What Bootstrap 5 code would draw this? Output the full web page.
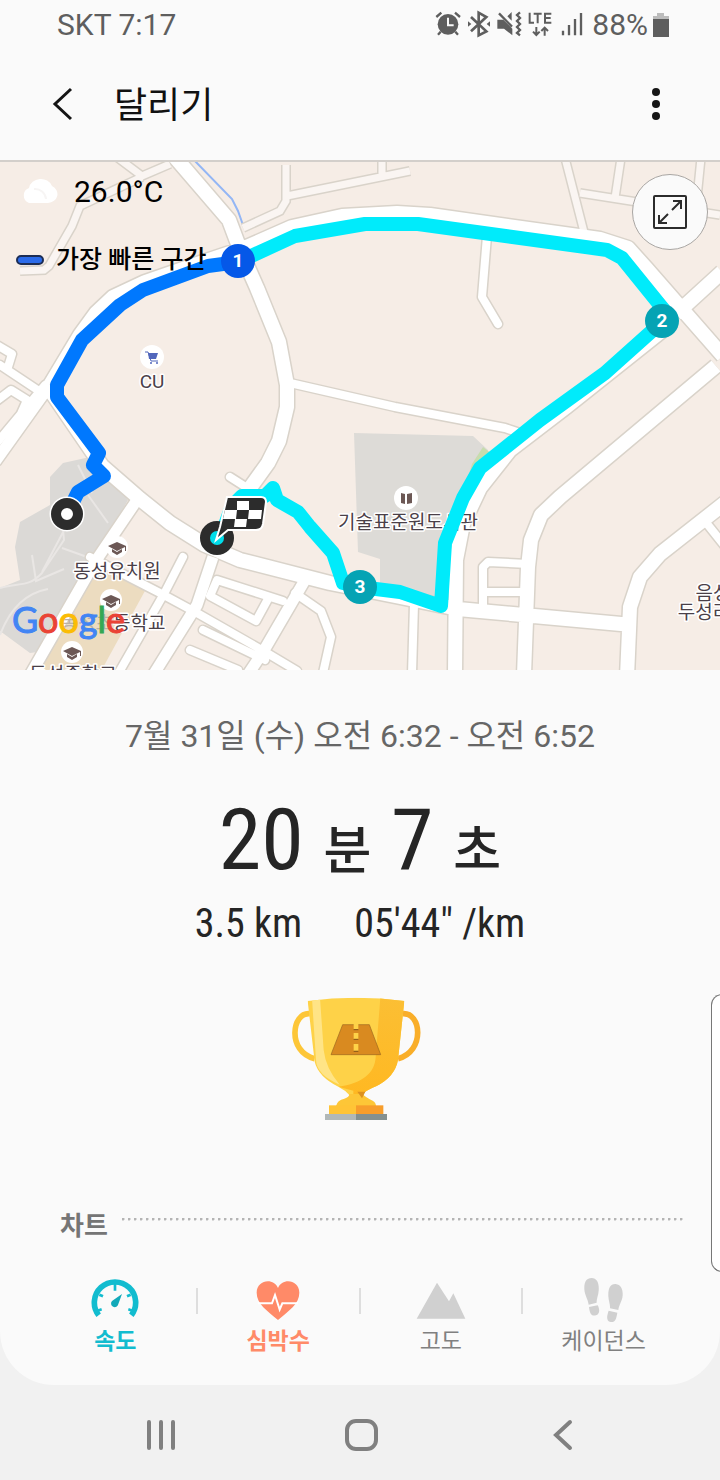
<!DOCTYPE html>
<html lang="ko">
<head>
<meta charset="utf-8">
<meta name="viewport" content="width=device-width, initial-scale=1">
<title>달리기</title>
<link href="https://cdn.jsdelivr.net/npm/bootstrap@5.3.0/dist/css/bootstrap.min.css" rel="stylesheet">
<style>
  body { background: #f1f1f1; color: #252525; font-family: Roboto, "Noto Sans CJK KR", sans-serif; }
  svg { display: block; }
  button { border: 0; background: none; padding: 0; color: inherit; }
  .screen { background: #fafafa; border-radius: 0 0 54px 54px; }
  .statusbar { height: 48px; padding: 2px 50px 0 57px; color: #5e5e5e; font-size: 30px; line-height: 46px; }
  .appbar { height: 112px; padding: 0 52px; }
  .appbar h1 { font-size: 36px; line-height: 48px; color: #111; font-weight: 400; margin: 4px 0 0 38px; }
  .map-area { border-top: 2px solid #d3cfcb; aspect-ratio: 720 / 510; }
  .map-info { top: 8px; left: 16px; color: #000; }
  .weather { font-size: 30px; line-height: 44px; }
  .legend { font-size: 25px; line-height: 36px; font-weight: 500; margin-top: 28px; }
  .legend-line { width: 28px; height: 10px; border: 2px solid #1c2d55; border-radius: 5px; background: #2b6bea; }
  .expand { top: 12px; right: 12px; width: 76px; height: 76px; border: 1px solid #a9a6a3; border-radius: 50%; background: #fafafa; }
  .when { font-size: 32px; line-height: 48px; color: #666; padding-top: 42px; }
  .duration, .pace { font-family: "Roboto Condensed", "Liberation Sans Narrow", Roboto, "Noto Sans CJK KR", sans-serif; }
  .duration { font-size: 86px; line-height: 96px; font-weight: 400; padding-top: 32px; color: #252525; }
  .duration .unit { font-size: 52px; font-weight: 500; }
  .pace { font-size: 40px; line-height: 48px; gap: 52px; }
  .trophy { width: 160px; padding-top: 32px; }
  .chart-head { padding: 78px 36px 0 60px; color: #757575; }
  .chart-head h2 { font-size: 26px; line-height: 36px; font-weight: 700; }
  .dots { height: 3px; margin: 0 0 14px 14px; background: radial-gradient(circle at 1px 1px, #b4b4b4 1px, transparent 2px) 0 0 / 6px 3px; }
  .chart-tabs { padding: 34px 36px 27px 35px; }
  .chart-tabs button { font-size: 23px; line-height: 32px; color: #808080; }
  .chart-tabs .speed { color: #12bccf; font-weight: 700; }
  .chart-tabs .heart { color: #ff8a68; font-weight: 700; }
  .split { width: 2px; height: 26px; margin-top: 10px; background: #dedede; }
  .edge-panel { right: -2px; top: 324px; width: 11px; height: 278px; border: 1px solid #777; border-radius: 14px 0 0 14px; background: #fff; }
  .navkeys { height: 96px; padding: 4px 59px 0 61px; }
  .lbl { font: 400 19px Roboto, "Noto Sans CJK KR", sans-serif; fill: #4a4048; stroke: #fff; stroke-width: 3px; paint-order: stroke; stroke-linejoin: round; text-anchor: middle; }
  .under-logo { fill: #b9b0a8; stroke: none; }
  .num { font: 700 19px Roboto, sans-serif; fill: #fff; text-anchor: middle; }
</style>
</head>
<body>
<div class="screen">
  <header>
    <div class="statusbar d-flex justify-content-between align-items-center">
      <span>SKT 7:17</span>
      <div class="d-flex align-items-center">
        <svg width="154" height="36" viewBox="100 20 462 108" fill="#5e5e5e" stroke="#5e5e5e" stroke-width="0">
          <circle cx="142" cy="72" r="31"/><path d="M107 50l15-13M163 37l15 13M120 94l-8 9M164 94l8 9" fill="none" stroke-width="7"/><path d="M142 52v23h17" fill="none" stroke="#fafafa" stroke-width="6"/>
          <path d="M211 50l46 43-23 12V37l23 13-46 43" fill="none" stroke-width="8"/><path d="M202 63l10 8-10 8zM268 63l-10 8 10 8z"/>
          <path d="M290 58h18l27 27v20l-25-20h-20zM333 35v26l-13-13z"/><path d="M295 39l39 40" stroke-width="7"/><path d="M358 36l-9 8 9 9-9 9 9 9-9 9 9 9-9 9 9 7" fill="none" stroke-width="7"/>
          <path d="M387 37v30h13M399 40h24M411 40v29M452 40h-19v27h19M433 53h17" fill="none" stroke-width="6"/>
          <path d="M407 80v23M397 94l10 10 10-10M432 106V83M422 92l10-10 10 10" fill="none" stroke-width="6"/>
          <path d="M487 91v14M505 74v31M523 56v49M541 38v67" fill="none" stroke-width="7"/>
        </svg>
        <span class="ps-1 pe-1">88%</span>
        <svg width="18" height="26" viewBox="0 0 18 26"><path d="M5 1h7v3h5v4H1V4h4z" fill="#bcbcbc"/><path d="M1 7h16v18H1z" fill="#5e5e5e"/></svg>
      </div>
    </div>
    <div class="appbar d-flex align-items-center">
      <button aria-label="뒤로"><svg width="24" height="34" viewBox="0 0 24 34"><path d="M19 2L3 17l16 15" fill="none" stroke="#151515" stroke-width="3"/></svg></button>
      <h1>달리기</h1>
      <button class="ms-auto" aria-label="더보기"><svg width="24" height="34" viewBox="0 0 24 34" fill="#151515"><circle cx="12" cy="5" r="4"/><circle cx="12" cy="17" r="4"/><circle cx="12" cy="29" r="4"/></svg></button>
    </div>
  </header>

  <section class="map-area position-relative overflow-hidden" aria-label="지도">
    <svg width="100%" height="100%" viewBox="0 162 720 508" preserveAspectRatio="xMidYMid slice">
      <defs>
        <g id="paths" fill="none">
          <path d="M118 158l24 18 28-12M142 177L80 206l-8 20-23 40-5 4-24 1M286 165v36l-6 10-37 17M287 196l123-25M382 158v18M565 158l20 78M580 193l140 22M621 158l-6 40M701 158l-4 40"/>
        </g>
        <g id="lanes" fill="none" stroke-linecap="round" stroke-linejoin="round">
          <path d="M487 236l-5 61 16 27M290 383l105 24 110 21 12 4M230 477l22 14M0 365l45 30M-5 344l17 10-4 13M-5 402l16-12 16 10-8 18M90 557l70 36 37 20 70 40 30 18M183 557l-18 35-47 82M283 601l-66-21-7 16 46 25 12-22M203 630l62 30M190 650l48 20-4 10M295 593l26 18 10 26-8 36M483 612v-45l5-5 40 2M484 592h42M414 604l-2 70M708 525l16 20M45 385l-50 60"/>
        </g>
        <g id="streets" fill="none" stroke-linejoin="round">
          <path d="M137 500l-42 62-66 115M213 557l-16 48-45 72M305 580l-42 72-16 24M-5 462l55-77"/>
        </g>
        <g id="avenues" fill="none" stroke-linejoin="round">
          <path d="M174 156l55 64 12 32 16 36 22 54 8 43v22l-8 34-11 22-18 25M50 385l30-50 16-22 17-16 32-15 55-19 42-14 50-22 50-11 55-3 33 2 170 24 28 9 18 20 77 88M676 314l46-42M716 366l-156 131-19 18-10 25-3 27-4 108M664 329l-98 78-56 43-30 38-17 36-7 36-1 115M50 390l52 76 38 33 30 24 35 22 35 15 90 23 70 14 58 12 174 16M726 502l-66 52-20 23-10 30-3 70"/>
        </g>
      </defs>
      <rect y="158" width="720" height="514" fill="#f6ede6"/>
      <path d="M50 477l13-14 27-6 38 43-38 67-45 84-15 2-30-22v-43l20-8-5-33 5-25 30-17z" fill="#dbd9d6"/>
      <path d="M0 588c20-6 28 0 42-15l22-33-4-42M42 572l38-72M32 555l4 26 28-12M78 465l14 28M0 635q15-40 48-46M88 495l20 28M62 548l28 10" fill="none" stroke="#e9e6e4" stroke-width="2"/>
      <path d="M88 568l24 4 34 17-46 84H36z" fill="#ecdcc0"/>
      <path d="M354 433l119 3 15 14-22 50-22 100-64-13v-28l-22-7z" fill="#dddbd7"/><path d="M483 447l9 7-24 24 4-14z" fill="#c7dcae"/>
      <path d="M192 158l40 41 6 12 5 14" fill="none" stroke="#93b6f5" stroke-width="2"/>
      <g stroke="#d9d3ca"><use href="#paths" stroke-width="10"/><use href="#lanes" stroke-width="11"/><use href="#streets" stroke-width="14"/><use href="#avenues" stroke-width="17"/></g>
      <use href="#paths" stroke="#faf5f2" stroke-width="7"/>
      <g stroke="#fff"><use href="#lanes" stroke-width="8"/><use href="#streets" stroke-width="11"/><use href="#avenues" stroke-width="14"/></g>

      <g fill="#fff"><circle cx="152" cy="357" r="12"/><circle cx="117" cy="547" r="11"/><circle cx="111" cy="600" r="11"/><circle cx="72" cy="652" r="11"/><circle cx="406" cy="498" r="12"/></g>
      <path d="M148 353h10l-2 6h-7z" fill="#5166bb"/><path d="M145 352h3l3 9h7" fill="none" stroke="#5166bb" stroke-width="1"/><circle cx="151" cy="363" r="1" fill="#5166bb"/><circle cx="157" cy="363" r="1" fill="#5166bb"/>
      <g fill="#6c5855"><path id="cap" d="M108 546l9-4 9 4v5h-1v-4l-8 4zM112 549l5 3 5-3v3l-5 3-5-3z"/><use href="#cap" x="-6" y="53"/><use href="#cap" x="-45" y="105"/><path d="M401 493l4 1v10l-4-1zM407 494l5-1v10l-5 1z"/></g>
      <text class="lbl" x="152" y="388">CU</text>
      <text class="lbl" x="117" y="578">동성유치원</text>
      <text class="lbl" x="113" y="630"><tspan class="under-logo">동성초</tspan>등학교</text>
      <text class="lbl" x="73" y="681">동성중학교</text>
      <text class="lbl" x="408" y="529">기술표준원도서관</text>
      <text class="lbl" x="713" y="600">음성</text>
      <text class="lbl" x="704" y="619">두성리</text>

      <g fill="none" stroke-width="14" stroke-linejoin="round">
        <path d="M238 262l57-26 70-12h53l189 26 15 8 42 52-2 12-57 51-65 47-60 48-17 30-18 45-4 63-41-14-40-5-17-4-10-30-23-26-12-15-21-12-4-12-8 8-23 0-10 10-14 38" stroke="#00ebfb"/>
        <path d="M238 262l-30 4-65 24-23 15-38 35-25 45v12l42 56-6 12 11 11-26 16-11 22" stroke="#0078fe"/>
      </g>
      <circle cx="67" cy="514" r="12" fill="#fff" stroke="#fff" stroke-width="11"/><circle cx="67" cy="514" r="11" fill="#fff" stroke="#2c2c2c" stroke-width="10"/>
      <circle cx="217" cy="538" r="12" fill="#2c2c2c" stroke="#2c2c2c" stroke-width="10"/><circle cx="217" cy="538" r="7" fill="#00ddea"/>
      <path d="M227 497h34q5 0 5 5l-3 22q-1 6-7 6h-28l-12 10 4-13z" fill="#2c2c2c" stroke="#fff" stroke-width="2"/>
      <path d="M237 501h12v9h-12zM235 519h12l-1 8h-12zM225 510h12l-1 9h-13zM249 510h13l-1 9h-13z" fill="#fff"/>
      <circle cx="238" cy="261" r="17" fill="#0558e8"/><text class="num" x="238" y="267">1</text>
      <circle cx="662" cy="321" r="17" fill="#05a3b4"/><text class="num" x="662" y="327">2</text>
      <circle cx="360" cy="587" r="17" fill="#05a3b4"/><text class="num" x="360" y="593">3</text>
      <text x="12" y="633" font-family="Lato, sans-serif" font-size="36" font-weight="400" stroke-width="1"><tspan fill="#4285f4" stroke="#4285f4">G</tspan><tspan fill="#ea4335" stroke="#ea4335">o</tspan><tspan fill="#fbbc05" stroke="#fbbc05">o</tspan><tspan fill="#4285f4" stroke="#4285f4">g</tspan><tspan fill="#34a853" stroke="#34a853">l</tspan><tspan fill="#ea4335" stroke="#ea4335">e</tspan></text>
    </svg>
    <div class="map-info position-absolute">
      <div class="weather d-flex align-items-center">
        <svg class="ms-1" width="38" height="30" viewBox="0 0 38 30"><path d="M9 26a8 8 0 0 1 0-15 12 11 0 0 1 23-2 10 9 0 0 1-4 17z" fill="#fff"/><path d="M14 12a11 11 0 0 1 12 10" fill="none" stroke="#f7f5f4" stroke-width="2"/></svg>
        <span class="ms-3">26.0°C</span>
      </div>
      <div class="legend d-flex align-items-center"><span class="legend-line"></span><span class="ps-1 ms-2">가장 빠른 구간</span></div>
    </div>
    <button class="expand position-absolute d-flex align-items-center justify-content-center" aria-label="지도 확대">
      <svg width="34" height="34" viewBox="0 0 34 34" fill="none" stroke="#2b2b2b" stroke-width="2"><rect x="1" y="1" width="32" height="32" rx="1"/><path d="M19 15l8-8M20 6h8v8M15 19l-8 8M6 20v8h8"/></svg>
    </button>
  </section>

  <main class="position-relative overflow-hidden text-center">
    <p class="when mb-0">7월 31일 (수) 오전 6:32 - 오전 6:52</p>
    <p class="duration mb-0">20 <span class="unit">분</span> 7 <span class="unit">초</span></p>
    <div class="pace d-flex justify-content-center"><span>3.5 km</span><span>05'44" /km</span></div>
    <div class="d-flex justify-content-center">
      <svg class="trophy" viewBox="0 0 480 450" role="img" aria-label="트로피">
        <defs>
          <linearGradient id="cupShade" x2="0" y2="1"><stop stop-color="#fbbf35"/><stop offset="1" stop-color="#ffb821"/></linearGradient>
          <clipPath id="cup"><path d="M83 63Q228 44 373 63L354 240Q345 290 290 318Q255 332 246 345H208Q195 330 175 320Q115 290 104 245Z"/></clipPath>
        </defs>
        <path d="M90 101C35 95 20 215 104 236" fill="none" stroke="#fdc637" stroke-width="17"/>
        <path d="M367 101C425 95 436 215 354 236" fill="none" stroke="#f9ae29" stroke-width="17"/>
        <g clip-path="url(#cup)">
          <path d="M70 40h320v320H70z" fill="#fed248"/>
          <path d="M302 40h90v320H220v-28l-45-12c70-10 110-40 112-90z" fill="url(#cupShade)"/>
          <path d="M95 40h24l12 170q6 55 48 104Q110 285 108 240Z" fill="#ffe486"/>
        </g>
        <path d="M208 342h40q8 10 30 20 10 5 10 16H168q4-18 25-22 15-4 15-14z" fill="#fdc637"/><path d="M232 335h24l-10 20z" fill="#dc9120"/>
        <path d="M147 376h81v27h-81z" fill="#ffc436"/><path d="M228 376h82v27h-82z" fill="#f79d2b"/>
        <path d="M135 402h93v18h-93z" fill="#b1b8b8"/><path d="M228 402h93v18h-93z" fill="#849090"/>
        <path d="M188 134h80l34 90H153z" fill="#d98a20" stroke="#9a651d" stroke-width="2"/>
        <path d="M221 130h14v17h-14zM221 159h14v18h-14zM221 192h14v20h-14z" fill="#fed248"/><path d="M221 149h14M221 178h14M221 214h14" stroke="#875718" stroke-width="3"/>
      </svg>
    </div>
    <div class="chart-head d-flex align-items-center"><h2 class="mb-0">차트</h2><div class="dots flex-fill"></div></div>
    <div class="chart-tabs d-flex">
      <button class="col speed">
        <svg class="mx-auto mb-1" width="48" height="44" viewBox="0 0 144 132"><path d="M23 112A62 62 0 1 1 121 112" fill="none" stroke="#12bccf" stroke-width="17"/><path d="M72 18v20M25 50l11 5M119 50l-11 5M20 98l12-4M124 98l-12-4" stroke="#12bccf" stroke-width="8"/><path d="M93 48L82 78a11 11 0 1 1-19-9z" fill="#12a9b9"/></svg>속도</button>
      <span class="split"></span>
      <button class="col heart">
        <svg class="mx-auto mb-1" width="48" height="44" viewBox="0 0 144 132"><path d="M72 126C40 98 8 78 8 44 8 4 60-2 72 30 84-2 136 4 136 44c0 34-32 54-64 82z" fill="#ff8a68"/><path d="M12 76h42l9-25 14 44 8-19h47" fill="none" stroke="#fff" stroke-width="6"/></svg>심박수</button>
      <span class="split"></span>
      <button class="col">
        <svg class="mx-auto mb-1" width="50" height="44" viewBox="0 0 150 132"><path d="M2 122L63 14 99 70l13-24 36 76z" fill="#d0d0d0"/></svg>고도</button>
      <span class="split"></span>
      <button class="col">
        <svg class="mx-auto mb-1" width="42" height="44" viewBox="0 0 126 132" fill="#d0d0d0"><path d="M26 0c16 0 23 16 21 38-1 15-7 25-6 36l-24 6C15 64 5 52 4 34 3 12 10 0 26 0zM18 87l26-5c8 14 5 27-5 30-15 4-19-8-21-25zM98 18c16 2 22 16 21 34-1 18-11 28-13 44l-25-5c1-12-4-20-5-36-1-22 5-38 22-37zM77 98l26 6c-3 22-9 30-20 28-14-3-12-17-6-34z"/></svg>케이던스</button>
    </div>
    <div class="edge-panel position-absolute"></div>
  </main>
</div>

<nav class="navkeys d-flex align-items-center" aria-label="시스템">
  <button class="col" aria-label="최근 앱"><svg class="mx-auto" width="32" height="32" viewBox="0 0 32 32"><path d="M4 3v26M16 3v26M28 3v26" stroke="#808080" stroke-width="4" stroke-linecap="round"/></svg></button>
  <button class="col" aria-label="홈"><svg class="mx-auto" width="34" height="34" viewBox="0 0 34 34"><rect x="3" y="3" width="29" height="28" rx="9" fill="none" stroke="#808080" stroke-width="4"/></svg></button>
  <button class="col" aria-label="뒤로"><svg class="mx-auto" width="32" height="32" viewBox="0 0 32 32"><path d="M25 3L11 16l14 13" fill="none" stroke="#808080" stroke-width="4" stroke-linecap="round"/></svg></button>
</nav>
<script src="https://cdn.jsdelivr.net/npm/bootstrap@5.3.0/dist/js/bootstrap.bundle.min.js"></script>
</body>
</html>
